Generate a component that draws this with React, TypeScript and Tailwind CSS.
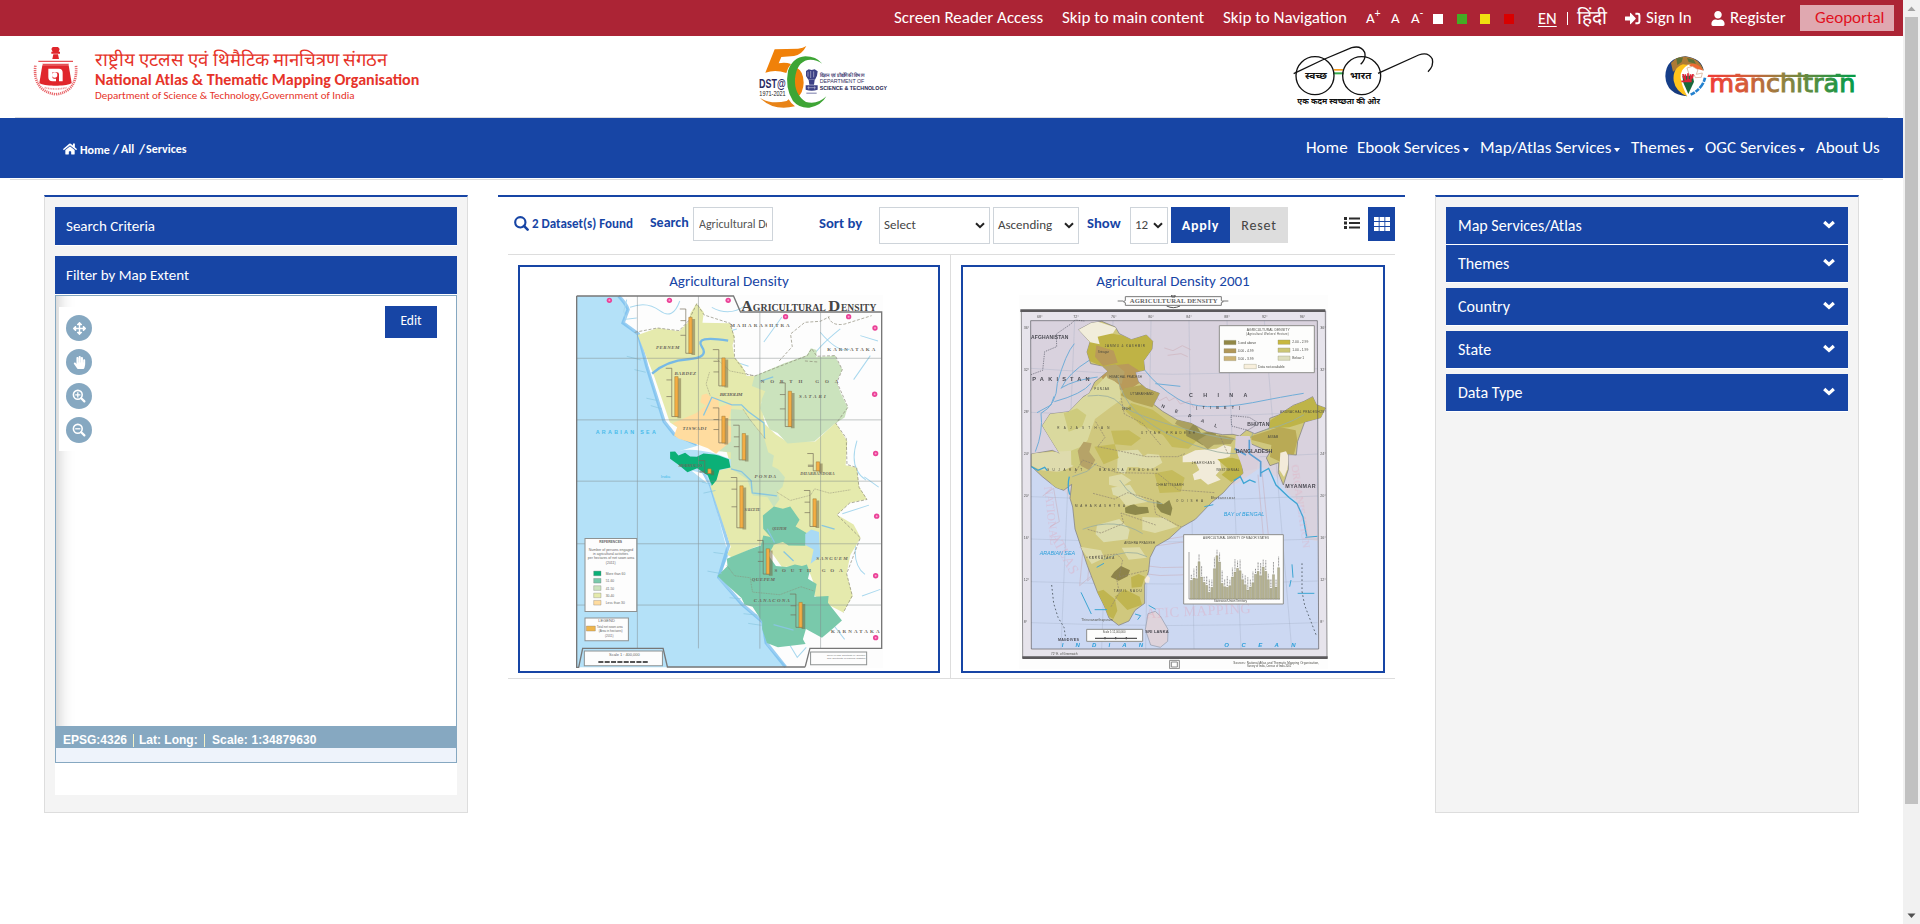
import React from "react";
import { FaArrowsAlt, FaHandPaper, FaHome, FaUser } from "react-icons/fa";

function Emblem() {
  return (
    <svg className="h-[50px] w-[46px] shrink-0" viewBox="99 138 138 150">
      <g fill="#e0262c">
        <path d="M158 141h16l5 6-3 8h4v6h-26v-6h4l-4-8zM160 163h14l3 14h-20z" />
        <path d="M115 182h104v4H115zM127 191h80l-2 5h-76z" opacity="0.8" />
        <path d="M127 196h79l9 53c-14 8-31 8-48 8s-35 0-49-8z" />
      </g>
      <path d="M145 206h32q11 0 11 12v26h-11v-21q0-6-6-6h-14v14q0 5 5 5h6v8h-10q-13 0-13-13z" fill="#fff" />
      <circle cx="164" cy="225" r="8" fill="#fff" />
      <path d="M106 197q-8 76 61 86q67-8 61-86" fill="none" stroke="#e0262c" strokeWidth="8" strokeDasharray="3.5 2.5" opacity="0.7" />
      <path d="M134 263q33 8 66 0" fill="none" stroke="#e0262c" strokeWidth="5" strokeDasharray="3 2" opacity="0.5" />
    </svg>
  );
}

function DstLogo() {
  return (
    <svg className="h-[62px] w-[129px] shrink-0 overflow-visible" viewBox="179 138 387 186" fontFamily="Liberation Sans Narrow, Liberation Sans, sans-serif">
      <path d="M226 148L296 146Q312 144 321 138Q308 164 284 168L246 171L238 190Q258 186 275 192Q264 204 261 219Q228 208 198 218Z" fill="#f08109" />
      <path d="M290 202Q313 214 313 248Q312 278 293 294Q283 272 284 246Q284 220 290 202Z" fill="#f08109" />
      <path d="M182 293Q212 314 262 303L268 298Q276 312 287 319Q220 334 182 293Z" fill="#e88418" />
      <path d="M369 191Q350 169 318 169Q279 172 266 213Q256 264 281 303Q300 325 330 323Q366 317 381 289Q354 315 320 306Q284 282 287 236Q292 188 325 180Q349 177 369 191Z" fill="#3ea535" />
      <text x="179" y="265" fontSize="37" fontWeight="bold" fill="#29285f" textLength="80" lengthAdjust="spacingAndGlyphs">DST@</text>
      <text x="180" y="288" fontSize="20" fill="#222" textLength="79" lengthAdjust="spacingAndGlyphs">1971-2021</text>
      <g fill="#3d4185">
        <path d="M320 213l8-5 9 2 9-2 9 6-2 13-6 12h-20l-7-11zM328 240h18l-2 14h-14zM319 256h36v13q-18 6-36 0z" />
        <path d="M321 278h31v3h-31z" opacity="0.7" />
      </g>
      <path d="M326 215v15m8-17v21m9-20v18m-19 31h25m-21-4v9m18-9v9" stroke="#fff" strokeWidth="2" opacity="0.65" />
      <text x="361" y="230" fontSize="15" fontWeight="bold" fill="#3f4174" textLength="134" lengthAdjust="spacingAndGlyphs">विज्ञान एवं प्रौद्योगिकी विभाग</text>
      <text x="361" y="250" fontSize="18" fill="#34345f" textLength="134" lengthAdjust="spacingAndGlyphs">DEPARTMENT OF</text>
      <text x="361" y="269" fontSize="17" fontWeight="bold" fill="#25254f" textLength="202" lengthAdjust="spacingAndGlyphs">SCIENCE &amp; TECHNOLOGY</text>
    </svg>
  );
}

function SwachhLogo() {
  return (
    <svg className="h-[62px] w-[144px] shrink-0" viewBox="40 135 432 186" fontFamily="Noto Sans Devanagari, Lohit Devanagari, sans-serif">
      <path d="M162 207h30v5h-30z" fill="#f59a1d" />
      <path d="M162 217h30v6h-30z" fill="#35a84c" />
      <g fill="none" stroke="#111" strokeWidth="4">
        <circle cx="106" cy="227" r="57" />
        <circle cx="246" cy="227" r="57" />
        <path d="M42 221L128 180L216 143Q244 135 255 157Q260 177 243 193" />
        <path d="M295 220L417 165Q446 154 458 177Q463 198 445 215" />
      </g>
      <text x="76" y="238" fontSize="28" fontWeight="bold" fill="#111" textLength="66" lengthAdjust="spacingAndGlyphs">स्वच्छ</text>
      <text x="211" y="238" fontSize="28" fontWeight="bold" fill="#111" textLength="64" lengthAdjust="spacingAndGlyphs">भारत</text>
      <text x="53" y="313" fontSize="23" fontWeight="bold" fill="#111" textLength="248" lengthAdjust="spacingAndGlyphs">एक कदम स्वच्छता की ओर</text>
    </svg>
  );
}

function ManchitranLogo() {
  return (
    <svg className="h-[41px] w-[191px] shrink-0 overflow-visible" viewBox="196 169 573 123">
      <defs>
        <linearGradient id="word" gradientUnits="userSpaceOnUse" x1="326" x2="768" y1="0" y2="0">
          <stop offset="0" stopColor="#f13b34" />
          <stop offset="0.25" stopColor="#d65b39" />
          <stop offset="0.5" stopColor="#95803f" />
          <stop offset="0.75" stopColor="#4b8e40" />
          <stop offset="1" stopColor="#009c48" />
        </linearGradient>
        <linearGradient id="globe">
          <stop offset="0" stopColor="#153f8c" />
          <stop offset="1" stopColor="#1e3157" />
        </linearGradient>
      </defs>
      <path d="M257 170Q198 175 197 230Q200 284 262 290Q230 267 230 232Q231 195 257 180Q290 178 312 213Q306 176 257 170Z" fill="url(#globe)" />
      <path d="M214 190Q232 168 262 171Q300 176 312 212Q281 185 248 199Q232 207 220 216Z" fill="#ad7a35" />
      <path d="M230 176l20-3-4 14-13 9zM262 175l20 5 7 12-22-5z" fill="#5c7137" />
      <path d="M250 194Q218 205 222 243Q228 276 263 290Q247 262 243 235Q240 209 265 196Z" fill="#ffc31b" />
      <path d="M268 196Q290 184 312 213Q293 206 283 209Z" fill="#ed6a33" />
      <path d="M262 205l16-5 17 10-5 14 18-4-3 13-18 1-3-8-14 3z" fill="#fff" stroke="#d0a284" strokeWidth="2" />
      <path d="M248 228h31l4 18-17 37-15-34z" fill="#18693c" />
      <path d="M250 223q2 18 12 20q18-2 18-20M257 224v20m8-23v25m8-22v20m-28 1h31" fill="none" stroke="#de2435" strokeWidth="5" />
      <path d="M316 234Q309 267 273 285" fill="none" stroke="#2381cf" strokeWidth="8" strokeDasharray="13 3 20 3" />
      <path d="M326 225H768V232H323ZM407 222h15v5h-15zM708 222h15v5h-15z" fill="url(#word)" />
      <text x="329" y="278" fontFamily="DejaVu Sans, sans-serif" fontSize="76" stroke="url(#word)" strokeWidth="3" fill="url(#word)" textLength="438" lengthAdjust="spacingAndGlyphs">manchitran</text>
    </svg>
  );
}

const goaPins = [[148, 64], [328, 64], [504, 64], [676, 113], [865, 113], [944, 147], [943, 346], [946, 524], [949, 712], [946, 891], [946, 1077]];
const goaBars = [[391, 115, 108], [490, 237, 84], [349, 293, 120], [689, 337, 106], [490, 412, 80], [551, 464, 79], [448, 570, 14], [544, 621, 126], [773, 549, 27], [763, 660, 83], [623, 810, 76], [721, 971, 75]];

function GoaMap() {
  return (
    <svg className="h-[373px] w-[307px] shrink-0" viewBox="48 48 920 1120" preserveAspectRatio="none" fontFamily="Liberation Sans, sans-serif">
      <path d="M48 48H968V1168H48Z" fill="#fdfdfd" />
      <path d="M50 51H178L205 90L189 130L234 168L262 265L312 430L345 470L415 500L330 525L450 620L505 830L474 900L548 980L606 1030L620 1100L680 1166H50Z" fill="#b4e1f8" />
      <path d="M176 51Q200 76 204 92L189 132L235 165L260 262L312 428L342 466L410 496" fill="none" stroke="#6fb9ec" strokeWidth="10" opacity="0.7" />
      <path d="M408 540L452 620L505 800L476 896L545 976L608 1030L618 1092L676 1165" fill="none" stroke="#6fb9ec" strokeWidth="10" opacity="0.7" />
      <g fill="none" stroke="#a9d8ee" strokeWidth="3">
        <path d="M200 62l-9 35 7 24 32-4M210 85q50-20 89 10t60-29M455 85q53 29 100-5M840 150q-75 60-92 100M780 160q55 65 88 50M890 485q-26 85 27 119M846 705l80-26M890 775q-18 80 24 112M905 952l55-20M805 1020l48 62M680 1085l31 51 27-30" />
        <path d="M565 262l-60-20M530 150l-75 22M665 114l-54 75M900 170l53 16M930 230l-50 72M955 625l-43-31" />
      </g>
      <path d="M233 168L292 147L357 157L385 129L391 103L409 73L431 100L427 131L508 133L524 174L517 199L523 236L545 259L560 291L606 292L617 345L602 374L614 435L646 466L676 486L765 488L826 431L844 460L861 487L856 559L889 567L897 625L920 661L869 672L830 708L880 737L901 777L870 829L859 884L877 952L849 1001L810 981L762 950L765 924L740 861L665 865L633 820L625 790L581 806L516 837L501 827L512 805L451 622L470 575L512 565L500 520L430 500L329 430L283 294Z" fill="#e5eaad" />
      <path d="M583 291L670 254L740 229L752 208L769 213L768 235L811 232L824 229L829 242L846 272L829 308L841 342L862 385L853 416L822 435L763 487L682 494L652 462L628 451L600 389L605 360L615 337L575 321Z" fill="#cbe3bd" />
      <path d="M512 390L548 393L570 421L592 451L613 481L624 520L641 530L636 562L654 571L674 595L667 624L651 639L658 661L641 685L622 655L578 650L561 601L512 569L512 520L476 517L513 473Z" fill="#cbe3bd" />
      <path d="M329 524Q382 500 472 526L512 541V566L470 577L452 622L436 586L350 562Z" fill="#b4e1f8" />
      <path d="M425 348L440 344L455 358L474 354L477 384L515 372L513 391L502 437L513 446L512 488L476 517L468 525L443 508L415 498L356 480L342 470L352 443L337 433L409 402L438 380L421 370Z" fill="#ffdc9f" />
      <path d="M330 519L345 518L355 530L375 522L390 533L410 534L430 524L462 527L476 530L506 541L511 566L478 573L469 604L455 621L443 590L411 568L382 580L357 559L330 540Z" fill="#0bb077" />
      <path d="M608 710L641 683L668 690L690 683L718 723L706 743L744 766L735 801L685 800L668 790L637 799L631 775L609 750Z" fill="#79c9ab" />
      <path d="M500 840L575 809L602 800L609 770L631 775L640 800L624 829L647 862L679 865L704 857L725 862L740 857L748 880L743 900L769 916L762 954L805 952L803 972L845 1025L812 1055L785 1077L737 1051L728 1082L736 1096L653 1106L620 1093L606 1051L606 1029L577 984L553 977L544 958L499 917L472 892L502 862Z" fill="#79c9ab" />
      <path d="M735 766L753 752L776 760L780 833L751 855L760 812L735 799Z" fill="#a9daf4" />
      <g fill="none" stroke="#88c6df" strokeWidth="4">
        <path d="M276 284Q320 245 384 241T425 203T504 185" strokeWidth="7" stroke="#77b9e5" />
        <path d="M430 410L455 355L515 378L544 378L564 398L611 432L613 478M512 570L544 578L573 606L576 642L650 651M600 307L639 294M621 750L643 791M784 740L823 751M670 818L700 847M640 1038L700 1054" />
        <path d="M242 243l-42-11M257 280l-34-8M293 365l-34-7M305 390l-33-10M425 610l31 6M430 643l36-8M490 825l-30-4M485 885l-43-8M542 960l-34-3M590 1009l-40-4M604 1040l-40-6" strokeWidth="2" />
      </g>
      <g fill="none" stroke="#898774" strokeWidth="2" strokeDasharray="9 5">
        <path d="M224 160L292 147L357 155L385 126L410 74L432 108L510 133L522 175L523 236L561 287L584 291L741 230L754 209L770 232L825 230L846 272L830 310L863 385L827 434L858 478L860 557L889 566L896 625L920 662L868 673L830 708L900 777L859 885L876 951L849 1002" />
        <path d="M657 246L696 203L691 165L734 130L780 127L808 113M734 246l37 3M804 113q10 30 50 22l80-25" />
        <path d="M448 280l-10 35 12 35M470 240l39 36 73 14M548 390l21 32 48 60M650 640l40 25 61-16 12-19 45 13 62-10M500 860l23 31 47 6 7 43 82 8 63-24 40 13" strokeDasharray="3 2" opacity="0.8" />
      </g>
      <g stroke="#82898c" strokeWidth="1.8" opacity="0.8">
        <path d="M232 51V1109M415 51V1109M599 100V1110M781 100V1110M51 238H964M51 423H964M51 607H964M51 795H964M51 979H964" />
      </g>
      <path d="M50 51H520L541 99H964V1109H749L735 1164M50 51V1166H56L68 1109H309L322 1165H735" fill="none" stroke="#777" strokeWidth="4" />
      {goaPins.map(([x, y]) => (
        <g key={x + "-" + y}>
          <circle cx={x} cy={y} r="8" fill="#ea4397" />
          <circle cx={x} cy={y} r="3" fill="#ff9bd1" />
        </g>
      ))}
      {goaBars.map(([x, y, h]) => (
        <g key={x + "-" + y}>
          <path d={`M${x + 5} ${y + 5}h9v${h}h-11z`} fill="#705f3b" opacity="0.5" />
          <path d={`M${x - 14} ${y - 25}V${y + h}M${x - 32} ${y - 25}h18M${x - 30} ${y + 10}h16M${x - 30} ${y + h / 2}h16M${x - 14} ${y + h}h20`} fill="none" stroke="#726b57" strokeWidth="2" />
          <path d={`M${x - 5} ${y}h10v${h}h-10z`} fill="#f4ad43" stroke="#9c7936" strokeWidth="1.5" />
        </g>
      ))}
      <g fontFamily="Liberation Serif, serif" fontWeight="bold" fill="#444">
        <text x="543" y="95" fontSize="46" textLength="34" lengthAdjust="spacingAndGlyphs">A</text>
        <text x="578" y="95" fontSize="32" textLength="219" lengthAdjust="spacingAndGlyphs">GRICULTURAL</text>
        <text x="804" y="95" fontSize="46" textLength="36" lengthAdjust="spacingAndGlyphs">D</text>
        <text x="842" y="95" fontSize="32" textLength="106" lengthAdjust="spacingAndGlyphs">ENSITY</text>
      </g>
      <g fill="#6b675c" fontSize="15" fontFamily="Liberation Serif, serif" fontWeight="bold">
        <text x="510" y="144" textLength="178">MAHARASHTRA</text>
        <text x="801" y="215" textLength="144">KARNATAKA</text>
        <text x="812" y="1063" textLength="146">KARNATAKA</text>
        <text x="602" y="311" textLength="232">NORTH  GOA</text>
        <text x="643" y="880" textLength="204">SOUTH  GOA</text>
        <g fontStyle="italic">
          <text x="288" y="210" textLength="70">PERNEM</text>
          <text x="343" y="287" textLength="65">BARDEZ</text>
          <text x="479" y="350" textLength="68">BICHOLIM</text>
          <text x="716" y="358" textLength="80">SATARI</text>
          <text x="367" y="452" textLength="72">TISWADI</text>
          <text x="583" y="597" textLength="65">PONDA</text>
          <text x="355" y="563" textLength="72" fontSize="12">MORMUGAO</text>
          <text x="720" y="589" textLength="103" fontSize="13">DHARBANDORA</text>
          <text x="553" y="698" textLength="47" fontSize="12">SALCETE</text>
          <text x="636" y="755" textLength="43" fontSize="11">QUEPEM</text>
          <text x="768" y="845" textLength="94">SANGUEM</text>
          <text x="575" y="907" textLength="69">QUEPEM</text>
          <text x="581" y="970" textLength="108">CANACONA</text>
        </g>
      </g>
      <text x="107" y="465" fontSize="16" fontWeight="bold" fill="#49bbea" textLength="180">ARABIAN  SEA</text>
      <text x="302" y="597" fontSize="13" fill="#49bbea">India</text>
      <g fill="#fdfdfd" stroke="#8e9292" strokeWidth="3">
        <path d="M75 779H230V998H75ZM75 1018H205V1086H75ZM73 1117H307V1161H73ZM751 1120H919V1158H751Z" />
      </g>
      <g fill="#666" fontSize="12">
        <g textAnchor="middle">
          <text x="152" y="794" fontWeight="bold" fontSize="10">REFERENCES</text>
          <text x="153" y="817" fontSize="10.5">Number of persons engaged</text>
          <text x="152" y="829" fontSize="10.5">in agricultural activities</text>
          <text x="153" y="842" fontSize="10.5">per hectares of net sown area</text>
          <text x="152" y="856" fontSize="10.5">(2011)</text>
        </g>
        <text x="137" y="888" fontSize="10">More than 60</text>
        <text x="137" y="910" fontSize="10">51-60</text>
        <text x="137" y="933" fontSize="10">41-50</text>
        <text x="137" y="954" fontSize="10">30-40</text>
        <text x="137" y="976" fontSize="10">Less than 30</text>
        <text x="115" y="1029">LEGEND</text>
        <text x="110" y="1049" fontSize="9">Total net sown area</text>
        <text x="116" y="1060" fontSize="9">(Area in hectares)</text>
        <text x="135" y="1074" fontSize="9">(2011)</text>
        <text x="147" y="1133" textLength="92">Scale  1 : 400,000</text>
        <text x="800" y="1131" fontSize="7" textLength="115" lengthAdjust="spacingAndGlyphs">Survey of India, Directorate of Agriculture</text>
        <text x="800" y="1142" fontSize="7" textLength="115" lengthAdjust="spacingAndGlyphs">Goa, Directorate of Planning, Statistics</text>
      </g>
      <path d="M115 1150H265" stroke="#555" strokeWidth="6" strokeDasharray="15 4" />
      <g stroke="#777" strokeWidth="1">
        <path d="M101 877h22v14h-22z" fill="#0bb077" />
        <path d="M101 899h22v14h-22z" fill="#79c9ab" />
        <path d="M101 921h22v14h-22z" fill="#cbe3bd" />
        <path d="M101 943h22v14h-22z" fill="#e5eaad" />
        <path d="M101 965h22v14h-22z" fill="#ffdc9f" />
        <path d="M79 1042h27v15h-27z" fill="#efb54b" />
      </g>
    </svg>
  );
}

const stateBars = [56, 63, 61, 112, 66, 50, 41, 20, 35, 91, 130, 111, 47, 37, 35, 40, 66, 81, 92, 85, 58, 43, 27, 36, 49, 74, 83, 70, 96, 83, 58, 32, 73, 36, 94];

const INDIA =
  "M233 149L270 129L302 124L343 141L355 161L391 179L436 165L455 184L453 207L428 242L431 270L403 277L412 305L435 325L475 340L458 373L485 394L529 420L570 430L618 455L665 464L696 463L716 468L737 450L761 461L805 445L806 415L833 405L877 376L909 364L935 350L946 374L973 384L959 413L911 426L890 484L886 525L861 522L862 568L847 615L832 578L833 548L807 557L796 534L807 516L760 496L722 479L701 507L718 533L726 580L690 612L667 638L632 667L583 718L541 742L504 776L464 799L447 833L443 873L431 915L431 970L402 991L384 1023L353 1036L324 1014L310 978L290 938L259 857L222 747L215 681L207 655L212 613L188 631L164 622L124 590L91 559L91 522L154 511L176 521L150 479L124 437L147 402L204 395L247 350L265 340L281 306L321 274L304 258L269 251L258 216L267 186Z";

function IndiaMap() {
  return (
    <svg className="h-[374px] w-[309px] shrink-0" viewBox="54 45 927 1122" preserveAspectRatio="none" fontFamily="Liberation Sans, sans-serif">
      <defs>
        <clipPath id="land"><path d={INDIA} /></clipPath>
      </defs>
      <path d="M54 45H981V1167H54Z" fill="#fdfdfd" />
      <path d="M61 92H977V1134H66Z" fill="#e7e4ec" />
      <path d="M89 122H949L953 1107H91Z" fill="#ccd8f2" />
      <path d="M89 122H949V783L917 777L904 682L862 640L831 595L782 560L711 608L640 636L207 655L181 621L91 535Z" fill="#d9d2de" />
      <g stroke="#9eaac1" fill="none" strokeWidth="1.2" opacity="0.8">
        <path d="M221 122L180 1106M336 122L302 1106M450 122L434 1106M564 122L579 1106M678 122L720 1106M790 122L872 1106M90 265Q510 300 950 266M90 397Q510 420 950 396M90 522Q510 550 950 522M90 650Q510 670 950 648M90 777Q510 794 950 777M90 905Q510 920 950 903M90 1028Q510 1045 950 1028" />
      </g>
      <g fill="none" stroke="#70add8" strokeWidth="3">
        <path d="M103 515Q127 455 120 400Q167 375 169 310Q194 220 220 191M160 365Q244 342 270 310M180 326Q201 280 266 240M182 323Q220 300 290 291M108 398l42-23 9-26M431 270Q466 317 531 357T755 368Q845 350 908 340M463 311L538 319" />
      </g>
      <g fill="none" stroke="#c9a0a8" strokeWidth="2" opacity="0.6">
        <path d="M459 344l17 18 20-11 8 12 19-11 15 20 28-9 12 20M490 204l26 8 28-15 25 12M500 226l40-5 20 9M125 648L158 625L175 725L147 740" />
        <path d="M270 550L236 917Q420 735 790 803L771 584M287 539L260 903Q422 716 804 786L783 575M248 784Q470 930 740 807M236 802Q462 960 750 824" />
      </g>
      <path d={INDIA} fill="#d0c87e" stroke="#77777f" strokeWidth="2" />
      <g clipPath="url(#land)">
        <path d="M245 185L302 155L388 171L458 155L458 250L430 275L330 271L257 239Z" fill="#bfb345" />
        <path d="M232 148L278 121L346 143L336 160L290 170L296 193L250 183Z" fill="#f1eddb" />
        <path d="M286 196l52 16 12 36-44 10-24-28zM321 258l61-7 31 20 1 39-38 25-58-20-17-24z" fill="#b99a5a" />
        <path d="M370 325l57-11 57 22-30 46-56-16-39-20z" fill="#b5a556" />
        <path d="M120 430L155 394L250 350L295 310L318 285L355 315L360 360L331 380L282 417L260 480L235 513L165 518Z" fill="#dad99e" />
        <path d="M83 520l128-8 23 26-17 20-40 18-56-5-39-18z" fill="#dedbad" />
        <path d="M188 400l40-15 28 20-13 35-40 15zM128 583l68-12 14 32-38 33zM210 512l42-16 16 35-31 34-26-10z" fill="#cecb7d" />
        <path d="M230 512l18-27 24 5-7 26 18 24-18 31-26-14zM304 260l40-7 27 22-9 37-42-17z" fill="#b6a368" />
        <path d="M351 512l60-3 27 32-20 21-38-1-9 22-23-11zM331 623l56-9 18 28-38 13-31-11zM288 735l67-18 31 32-6 29-72 9-24-24z" fill="#dcdcae" />
        <path d="M390 369l65 20 61 45 62 5 24 30-40 37-49-5-27-36-68-31-45-42zM460 580l53-10 38 23-12 43-63 3zM330 452l54-1 36 24-29 22-50-4zM280 500l61-8 12 42-45 19z" fill="#c5bb5c" />
        <path d="M552 431l30-1 18 29 45-6-1 32-39 11-24-15-25-13z" fill="#958e50" />
        <path d="M535 409l44 20-17 23-40-21zM590 481l30-18 51 4 30 8-12 17-50 2-19 14z" fill="#aba060" />
        <path d="M545 529l38-18 63-5 23-11 22 5-4 29-31 12 5 25-17 20 15 13-38 15-22-18-19 5-5-18 20-13-12-24-38 1z" fill="#f1ebd9" />
        <path d="M372 683l25-12 14 9 29 1 4 17-41 7-30-7zM467 661l20 12 18-13 9 25-5 22-29-10-13-17z" fill="#8d884b" />
        <path d="M324 590l38-8 29 19-32 22-35-9zM410 540l30-19 34 3 10 24-31 19-38-3zM352 648l52-6 39 23-68 12zM424 711l67 2 38 27-67 19-38-9zM237 800l63 11 10 23-38 18zM362 803l54-1 21 31-54 6z" fill="#dedba8" />
        <path d="M340 875l20-17 27 13-7 18-27 13-24-11z" fill="#8d834a" />
        <path d="M279 938l28-9 35 29 7 34-12 25-21-13zM341 950l30-22 45 22 7 24-44 16zM390 892l23-10 19 8-10 30-30 3z" fill="#c0b550" />
        <path d="M649 538l45-5 32 9v41l-35 23-29-22 20-17zM808 421l63-41 64-28 40 26-11 37-51 12-48 15-61 3z" fill="#beb448" />
        <path d="M750 469l85-28 49 10 5 30-12 50-25-3-14 17-31-14 4-36-59-15z" fill="#b9aa55" />
        <path d="M838 518l17-4 9 18-5 36-10 23-14-22z" fill="#f3eada" />
        <path d="M260 348Q330 339 355 370T570 452T755 458Q848 441 909 404M350 290Q370 410 540 480T745 500M214 590L258 574L287 550M245 748Q343 710 425 761M356 600Q394 667 483 671M307 840Q381 800 438 830" fill="none" stroke="#9aaf9f" strokeWidth="2.5" />
        <path d="M284 425L312 472L290 500L351 512L437 530L530 530L552 521M222 579L245 540L347 578L470 580L532 630L641 638M276 640L340 657L380 638L457 660L464 702L542 742M260 748L300 759L368 730L360 699L464 735M255 832L347 822L365 840L354 891L438 871M360 354L370 402L425 430L480 496M656 466L680 520M346 892L355 938L329 982" fill="none" stroke="#8f8570" strokeWidth="2" strokeDasharray="6 3" />
      </g>
      <path d="M704 468h42l10 39 21 24-10 36-39 6-15-42-11-24z" fill="#d8cedb" />
      <path d="M745 479V521L779 545V590M702 506L735 525" fill="none" stroke="#5b9ed3" strokeWidth="5" />
      <g fill="none" stroke="#3ca5d3" strokeWidth="4">
        <path d="M91 560l20 11 20-9 8 10M205 590q-7 28 1 54M698 602l20-12 10 20 18-10 18 7M779 579l24-14 22 50 40 38 23 18 18 40 11 58" />
        <path d="M443 976l21 12M402 1002l17 5-9 12M913 772l36-3M873 853l3 40M870 900l-4 20M610 680l27-6M281 989h37M287 862l22-12M240 937l31 65M890 940h50" strokeWidth="3" />
      </g>
      <path d="M441 1001l22-7 15 14 23 40-1 36-22 18-29-7-16-46z" fill="#ded3db" stroke="#8f99a9" strokeWidth="2" />
      <path d="M431 899l8-14 8 9-3 14h-11z" fill="#f5ebdf" />
      <path d="M152 915l6 55 13 42 18 30 6 38M903 850v84l8 42 34 88" fill="none" stroke="#5e6974" strokeWidth="3" strokeDasharray="5 7" />
      <path d="M90 284l35-13 6-56 36-15-1-38 42-29 14-13 28 3M690 407L745 412L774 430L740 451L692 438Z" fill="none" stroke="#585966" strokeWidth="2" strokeDasharray="4 3" />
      <g fill="none" stroke="#5b595c">
        <path d="M58 92H973M64 1133H980" strokeWidth="8" />
        <path d="M61 92L65 1134M973 92L978 1134" strokeWidth="2" />
        <path d="M89 122H949L953 1107H91Z" strokeWidth="2" />
      </g>
      <path d="M373 50h288v12l6 3-6 3v8H373v-8l-6-3 6-3zM350 63h17m298 0h17" fill="#fff" stroke="#777" strokeWidth="3" />
      <text x="386" y="70" fontSize="20" fontWeight="bold" fontFamily="Liberation Serif, serif" fill="#666" textLength="264">AGRICULTURAL DENSITY</text>
      <path d="M512 45h10v6h-10zM497 78q20 10 40 0" fill="none" stroke="#555" strokeWidth="3" />
      <g fill="#e5a0b4" opacity="0.35" fontSize="43" fontFamily="Liberation Serif, serif">
        <text x="435" y="1015" transform="rotate(-3 435 1015)" textLength="315">ATIC MAPPING</text>
        <text x="147" y="768" transform="rotate(62 147 768)">ATLAS</text>
        <text x="130" y="620" transform="rotate(84 130 620)" fontSize="35">NATIONAL</text>
        <text x="872" y="555" transform="rotate(82 872 555)" fontSize="34">ORGANISATION</text>
      </g>
      <g fill="#4a4a52" fontSize="16" fontWeight="bold">
        <text x="90" y="178" textLength="112" fontSize="15">AFGHANISTAN</text>
        <text x="94" y="304" textLength="172" fontSize="17">PAKISTAN</text>
        <text x="564" y="350" textLength="175">CHINA</text>
        <text x="585" y="386" textLength="133" fontSize="11">(TIBET)</text>
        <text x="739" y="437" textLength="66" fontSize="15">BHUTAN</text>
        <text x="704" y="518" textLength="110">BANGLADESH</text>
        <text x="853" y="623" textLength="91">MYANMAR</text>
        <text x="433" y="1058" textLength="70" fontSize="12">SRI LANKA</text>
        <text x="171" y="1084" textLength="63" fontSize="11">MALDIVES</text>
        <text x="480" y="382" transform="rotate(20 480 382)" textLength="178" fontSize="14">NEPAL</text>
        <g fontSize="9" fontWeight="normal" fill="#4c4b40">
          <text x="311" y="202" textLength="121">JAMMU &amp; KASHMIR</text>
          <text x="290" y="219">Srinagar</text>
          <text x="325" y="293" textLength="98">HIMACHAL PRADESH</text>
          <text x="280" y="331" textLength="45">PUNJAB</text>
          <text x="388" y="346" textLength="69">UTTARAKHAND</text>
          <text x="169" y="448" textLength="156">RAJASTHAN</text>
          <text x="420" y="461" textLength="162">UTTAR PRADESH</text>
          <text x="137" y="574" textLength="106">GUJARAT</text>
          <text x="293" y="574" textLength="178">MADHYA PRADESH</text>
          <text x="465" y="617" textLength="83">CHHATTISGARH</text>
          <text x="572" y="553" textLength="70">JHARKHAND</text>
          <text x="646" y="572" textLength="69">WEST BENGAL</text>
          <text x="525" y="666" textLength="81">ODISHA</text>
          <text x="222" y="680" textLength="150">MAHARASHTRA</text>
          <text x="370" y="793" textLength="92">ANDHRA PRADESH</text>
          <text x="263" y="836" textLength="77">KARNATAKA</text>
          <text x="338" y="936" textLength="84">TAMIL NADU</text>
          <text x="837" y="400" textLength="119">ARUNACHAL PRADESH</text>
          <text x="800" y="475">ASSAM</text>
          <text x="362" y="389">DELHI</text>
          <text x="629" y="658" textLength="73">Bhubaneswar</text>
          <text x="241" y="1024" textLength="94">Thiruvananthapuram</text>
        </g>
      </g>
      <g fill="#2b9fda" fontStyle="italic" fontSize="18">
        <text x="116" y="824" textLength="106" fontSize="16">ARABIAN SEA</text>
        <text x="668" y="709" textLength="122" fontSize="16">BAY of BENGAL</text>
        <text x="182" y="1102" textLength="244" fontWeight="bold">INDIAN</text>
        <text x="670" y="1101" textLength="214" fontWeight="bold">OCEAN</text>
      </g>
      <g fill="#fdfdfc" stroke="#8e8e8b" strokeWidth="3">
        <path d="M655 137H940V278H655ZM548 764H847V972H548ZM257 1048H425V1084H257Z" />
      </g>
      <g stroke="#908f72" strokeWidth="1">
        <path d="M669 181h36v13h-36z" fill="#918746" />
        <path d="M669 206h36v13h-36z" fill="#b19759" />
        <path d="M669 229h36v13h-36z" fill="#cdb374" />
        <path d="M831 180h36v13h-36z" fill="#c8b83e" />
        <path d="M831 204h36v13h-36z" fill="#ccc676" />
        <path d="M831 228h36v13h-36z" fill="#dedfbe" />
        <path d="M729 253h37v13h-37z" fill="#f8efdc" />
      </g>
      <g fill="#4b4b46" fontSize="10">
        <text x="737" y="154" textLength="129">AGRICULTURAL DENSITY</text>
        <text x="736" y="166" fontSize="8" textLength="127">(Agricultural Workers/ Hectare)</text>
        <text x="710" y="191">5 and above</text>
        <text x="710" y="216">4.00 - 4.99</text>
        <text x="710" y="240">3.00 - 3.99</text>
        <text x="874" y="190">2.00 - 2.99</text>
        <text x="874" y="213">1.00 - 1.99</text>
        <text x="874" y="237">Below 1</text>
        <text x="771" y="263">Data not available</text>
        <text x="606" y="777" fontSize="9" textLength="198">AGRICULTURAL DENSITY OF MAJOR STATES</text>
        <text x="638" y="967" fontSize="9">Statewise/Union Territory</text>
        <text x="305" y="1060" fontSize="8">Scale 1:12,000,000</text>
        <text x="150" y="1124" fontSize="9">72° E. of Greenwich</text>
        <text x="697" y="1152" fontSize="9" textLength="257">Sources: National Atlas and Thematic Mapping Organisation,</text>
        <text x="738" y="1162" fontSize="8">Survey of India, Census of India 2001</text>
      </g>
      <path d="M564 816V957H837" fill="none" stroke="#777" strokeWidth="2" />
      {stateBars.map((h, i) => (
        <g key={i}>
          <path d={`M${568 + i * 7.7} ${957 - h}h6v${h}h-6z`} fill="#b9b695" stroke="#77765f" strokeWidth="1" />
          <path d={`M${571 + i * 7.7} ${953 - h}v-${14 + ((i * 7) % 5) * 5}`} stroke="#777" strokeWidth="2.5" strokeDasharray="3 1.5" />
        </g>
      ))}
      <path d="M282 1075H408M312 1071v7m32-7v7m32-7v7" stroke="#555" strokeWidth="4" />
      <path d="M506 1141h29v25h-29zM511 1146h18v15h-18z" fill="none" stroke="#888" strokeWidth="3" />
      <g fill="#555" fontSize="11">
        <text x="108" y="115">68°</text><text x="217" y="115">72°</text><text x="330" y="115">76°</text><text x="442" y="115">80°</text><text x="556" y="115">84°</text><text x="670" y="115">88°</text><text x="783" y="115">92°</text><text x="896" y="115">96°</text>
        {[36, 32, 28, 24, 20, 16, 12, 8].map((d, i) => (
          <g key={d}><text x="68" y={147 + i * 126}>{d}°</text><text x="958" y={146 + i * 126}>{d}°</text></g>
        ))}
      </g>
    </svg>
  );
}

function SearchIcon({ className }: { className: string }) {
  return (
    <svg className={className} viewBox="0 0 14 14" fill="none" stroke="currentColor">
      <circle cx="5.9" cy="5.9" r="4.8" strokeWidth="2" />
      <path d="M9.3 9.3L12.7 12.7" strokeWidth="2.4" strokeLinecap="round" />
    </svg>
  );
}

function ZoomIcon({ plus }: { plus?: boolean }) {
  return (
    <svg className="h-[14px] w-[14px]" viewBox="0 0 14 14" fill="none" stroke="currentColor">
      <circle cx="5.8" cy="5.8" r="4.4" strokeWidth="1.6" />
      <path d="M9.2 9.2L12.4 12.4" strokeWidth="2.2" strokeLinecap="round" />
      <path d={plus ? "M3.2 5.8H8.4M5.8 3.2V8.4" : "M3.2 5.8H8.4"} strokeWidth="1.3" />
    </svg>
  );
}

function SignInIcon() {
  return (
    <svg className="mr-[5px] h-[13px] w-4 shrink-0" viewBox="0 0 16 13" fill="currentColor">
      <path d="M0.4 4.4H5V1.4Q5 .4 5.8 1L10.6 5.9Q11 6.5 10.6 7.1L5.8 12Q5 12.6 5 11.6V8.6H.4Q0 8.6 0 8.2V4.8Q0 4.4 .4 4.4Z" />
      <path d="M10.4 .8H13Q15.4 .8 15.4 3.2V9.8Q15.4 12.2 13 12.2H10.4V10.2H12.6Q13.4 10.2 13.4 9.4V3.6Q13.4 2.8 12.6 2.8H10.4Z" />
    </svg>
  );
}

function Caret() {
  return <span className="ml-[3px] mt-[3px] h-0 w-0 shrink-0 border-x-[3.5px] border-t-4 border-x-transparent border-t-white" />;
}

function NavItem({ label, width, caret }: { label: string; width: string; caret?: boolean }) {
  return (
    <a className={"flex shrink-0 items-center whitespace-nowrap " + width}>
      {label}
      {caret && <Caret />}
    </a>
  );
}

function Select({ value, width }: { value: string; width: string }) {
  return (
    <div className={"flex h-[37px] shrink-0 items-center justify-between border border-[#ced4da] bg-white pb-[2px] pl-1 pr-1 text-[13px] text-[#444] " + width}>
      <span>{value}</span>
      <svg className="mt-[2px] h-[7px] w-[10px] shrink-0" viewBox="0 0 10 7"><path d="M1 1.2L5 5.2L9 1.2" fill="none" stroke="#222" strokeWidth="2" /></svg>
    </div>
  );
}

const tools = [<FaArrowsAlt />, <FaHandPaper />, <ZoomIcon plus />, <ZoomIcon />];

function LeftPanel() {
  return (
    <aside className="ml-11 h-[618px] w-[424px] shrink-0 border border-t-2 border-[#ddd] border-t-[#1745a5] bg-[#f4f4f4] px-[10px] pt-[10px]">
      <h2 className="flex h-[39px] items-center border-b border-white bg-[#1745a5] pl-[11px] text-[15px] text-white">Search Criteria</h2>
      <h2 className="mt-[10px] flex h-[39px] items-center border-b border-white bg-[#1745a5] pl-[11px] text-[15px] text-white">Filter by Map Extent</h2>
      <div className="h-[500px] bg-white">
        <div className="flex h-[468px] flex-col border border-[#86a8c1]">
          <div className="flex h-[430px] shrink-0 items-start justify-between bg-white pl-[3px] pt-[10px] pr-[19px] shadow-[inset_24px_0_18px_-24px_rgba(0,0,0,0.28)]">
            <div className="mt-[1px] flex h-[144px] w-[40px] flex-col gap-2 bg-white pl-[7px] pt-2">
              {tools.map((icon, i) => (
                <span key={i} className="flex h-[26px] w-[26px] shrink-0 items-center justify-center rounded-full bg-[#86a8c1] text-[13px] text-white">
                  {icon}
                </span>
              ))}
            </div>
            <button className="h-8 w-[52px] bg-[#1745a5] pb-[1px] text-[13.5px] text-white">Edit</button>
          </div>
          <div className="flex h-[22px] shrink-0 items-center bg-[#86a8c1] pl-[7px] pt-[6px] font-['Liberation_Sans',sans-serif] text-[12px] font-bold whitespace-pre text-white">
            <span className="w-[70px]">EPSG:4326</span>
            <i className="mr-[5px] h-[13px] w-px bg-[#f5f2c8]" />
            <span className="w-[65px]">Lat: Long:</span>
            <i className="mr-[7px] h-[13px] w-px bg-[#f5f2c8]" />
            <span className="tracking-[0.1px]">Scale: 1:34879630</span>
          </div>
          <div className="grow bg-[#eef3fb]" />
        </div>
      </div>
    </aside>
  );
}

function Card({ title, width, children }: { title: string; width: string; children: React.ReactNode }) {
  return (
    <article className={"flex h-[408px] shrink-0 flex-col items-center border-2 border-[#1745a5] " + width}>
      <h3 className="flex h-[28px] shrink-0 items-center text-[15px] text-[#1745a5]">{title}</h3>
      {children}
    </article>
  );
}

function Results() {
  return (
    <main className="ml-[30px] h-[618px] w-[907px] shrink-0 border-t-2 border-[#1745a5] px-[10px] pt-[10px]">
      <div className="flex h-[48px] items-start whitespace-nowrap border-b border-[#ddd] pl-[6px] font-bold text-[#1745a5]">
        <SearchIcon className="mr-[3px] mt-[9px] h-[15px] w-[15px] shrink-0" />
        <span className="mt-[9px] w-[118px] shrink-0 text-[13px] leading-[16px]">2 Dataset(s) Found</span>
        <label className="mt-[6px] w-[43px] shrink-0 text-[14px] leading-5">Search</label>
        <div className="flex h-[34px] w-[80px] shrink-0 border border-[#ced4da] px-[5px]">
          <input className="w-full min-w-0 bg-transparent text-[12px] font-normal text-[#555] outline-none" defaultValue="Agricultural Density" />
        </div>
        <label className="ml-[46px] mt-[6px] w-[60px] shrink-0 text-[14.7px] leading-5">Sort by</label>
        <div className="flex gap-[3px] font-normal">
          <Select value="Select" width="w-[111px]" />
          <Select value="Ascending" width="w-[86px]" />
        </div>
        <label className="ml-2 mt-[6px] w-[43px] shrink-0 text-[14.7px] leading-5">Show</label>
        <div className="font-normal"><Select value="12" width="w-[38px]" /></div>
        <button className="ml-[3px] h-[36px] w-[59px] shrink-0 bg-[#1745a5] text-[14px] font-bold tracking-[0.8px] text-white">Apply</button>
        <button className="h-[36px] w-[58px] shrink-0 bg-[#ddd] text-[14px] font-normal tracking-[0.8px] text-[#444]">Reset</button>
        <svg className="ml-[56px] mt-[9px] h-[14px] w-4 shrink-0 fill-[#2b2b2b]" viewBox="0 0 16 14">
          <path d="M0 1h3v3H0zM0 5.5h3v3H0zM0 10h3v3H0zM5 1.4h11v2.2H5zM5 5.9h11v2.2H5zM5 10.4h11v2.2H5z" />
        </svg>
        <span className="ml-2 flex h-[34px] w-[27px] shrink-0 items-center justify-center bg-[#1745a5] text-white">
          <svg className="h-[14px] w-4" viewBox="0 0 16 14" fill="currentColor">
            <path d="M0 0h4.7v4H0zM5.6 0h4.8v4H5.6zM11.3 0H16v4h-4.7zM0 5h4.7v4H0zM5.6 5h4.8v4H5.6zM11.3 5H16v4h-4.7zM0 10h4.7v4H0zM5.6 10h4.8v4H5.6zM11.3 10H16v4h-4.7z" />
          </svg>
        </span>
      </div>
      <div className="flex h-[424px] border-b border-[#ddd]">
        <div className="w-[443px] shrink-0 border-r border-[#ddd] pl-[10px] pt-[10px]">
          <Card title="Agricultural Density" width="w-[422px]"><GoaMap /></Card>
        </div>
        <div className="pl-[10px] pt-[10px]">
          <Card title="Agricultural Density 2001" width="w-[424px]"><IndiaMap /></Card>
        </div>
      </div>
    </main>
  );
}

function Filters() {
  const rows = ["Map Services/Atlas", "Themes", "Country", "State", "Data Type"];
  return (
    <aside className="ml-[30px] h-[618px] w-[424px] shrink-0 border border-t-2 border-[#ddd] border-t-[#1745a5] bg-[#f4f4f4] px-[10px] pt-[10px]">
      {rows.map((row, i) => (
        <div key={row} className={"flex h-[38px] items-center justify-between border-b border-white bg-[#1745a5] pl-[12px] pr-[13px] text-[16px] text-white " + (i > 0 ? "mb-[5px]" : "")}>
          {row}
          <svg className="mb-[2px] h-[9px] w-3" viewBox="0 0 12 9"><path d="M1.2 2L6 6.4L10.8 2" fill="none" stroke="#fff" strokeWidth="3.2" /></svg>
        </div>
      ))}
    </aside>
  );
}

export default function App() {
  return (
    <div className="flex h-[924px] w-[1920px] overflow-hidden bg-white font-[Carlito,Lato,sans-serif]">
      <div className="w-[1903px] shrink-0">
        <div className="flex h-9 items-center whitespace-nowrap bg-[#ac2435] pl-[894px] text-[17px] text-white">
          <a className="w-[168px] shrink-0">Screen Reader Access</a>
          <a className="w-[161px] shrink-0">Skip to main content</a>
          <a className="w-[143px] shrink-0">Skip to Navigation</a>
          <span className="w-[25px] shrink-0 text-[15px]">A<sup>+</sup></span>
          <span className="w-[20px] shrink-0 text-[15px]">A</span>
          <span className="w-[22px] shrink-0 text-[15px]">A<sup>-</sup></span>
          <i className="mt-[2px] h-[10px] w-[10px] shrink-0 bg-white" />
          <i className="ml-[14px] mt-[2px] h-[10px] w-[10px] shrink-0 bg-[#45ab24]" />
          <i className="ml-[13px] mt-[2px] h-[10px] w-[10px] shrink-0 bg-[#f0df10]" />
          <i className="ml-[14px] mt-[2px] h-[10px] w-[10px] shrink-0 bg-[#d90000]" />
          <a className="ml-6 w-[29px] shrink-0 text-[16.5px] underline underline-offset-2">EN</a>
          <i className="h-[13px] w-px shrink-0 bg-white" />
          <a className="ml-[9px] w-[48px] shrink-0 text-[19px] leading-9">हिंदी</a>
          <SignInIcon />
          <a className="w-[65px] shrink-0">Sign In</a>
          <FaUser className="mr-[5px] h-[15px] w-[14px] shrink-0" />
          <a className="w-[70px] shrink-0">Register</a>
          <a className="flex h-[26px] w-[94px] shrink-0 items-center bg-[#e0a8b0] pl-[15px] text-[#e01020]">Geoportal</a>
        </div>
        <header className="mx-[15px] flex h-[82px] items-start border-b border-[#ddd] pl-[18px]">
          <div className="flex w-[726px] shrink-0 pt-[10px]">
            <Emblem />
            <div className="ml-4 whitespace-nowrap text-[#e63329]">
              <div className="h-[25px] text-[18.5px] font-medium leading-[28px]">राष्ट्रीय एटलस एवं थिमैटिक मानचित्रण संगठन</div>
              <div className="h-[17px] text-[16px] font-bold leading-[18px]">National Atlas &amp; Thematic Mapping Organisation</div>
              <div className="text-[11px] leading-[15px]">Department of Science &amp; Technology,Government of India</div>
            </div>
          </div>
          <div className="w-[534px] shrink-0 pt-[10px]"><DstLogo /></div>
          <div className="w-[372px] shrink-0 pt-[9px]"><SwachhLogo /></div>
          <div className="shrink-0 pt-[20px]"><ManchitranLogo /></div>
        </header>
        <nav className="flex h-[60px] items-center bg-[#1745a5] text-[17px] text-white">
          <div className="flex w-[1306px] shrink-0 items-center whitespace-nowrap pl-[63px] pt-[2px] text-[12px] font-bold">
            <FaHome className="mr-[3px] h-[14px] w-[14px]" />
            <span className="mt-[1px] w-[33px]">Home</span>
            <span className="w-2 text-[14px]">/</span><span className="w-[18px]">All</span>
            <span className="w-[7px] text-[14px]">/</span><span>Services</span>
          </div>
          <NavItem label="Home" width="w-[51px]" />
          <NavItem label="Ebook Services" width="w-[123px]" caret />
          <NavItem label="Map/Atlas Services" width="w-[151px]" caret />
          <NavItem label="Themes" width="w-[74px]" caret />
          <NavItem label="OGC Services" width="w-[111px]" caret />
          <NavItem label="About Us" width="w-[66px]" />
        </nav>
        <div className="ml-[10px] mt-px h-px w-[1873px] bg-[#ddd]" />
        <div className="mt-[15px] flex">
          <LeftPanel />
          <Results />
          <Filters />
        </div>
      </div>
      <div className="flex w-[17px] shrink-0 flex-col items-center bg-[#f1f1f1]">
        <svg className="h-[17px] w-[17px] shrink-0" viewBox="0 0 17 17"><path d="M4.5 11L8.5 6.5L12.5 11Z" fill="#a3a3a3" /></svg>
        <div className="h-[787px] w-[13px] bg-[#c1c1c1]" />
        <svg className="mt-auto h-[17px] w-[17px] shrink-0" viewBox="0 0 17 17"><path d="M4.5 6.5L8.5 11L12.5 6.5Z" fill="#505050" /></svg>
      </div>
    </div>
  );
}
